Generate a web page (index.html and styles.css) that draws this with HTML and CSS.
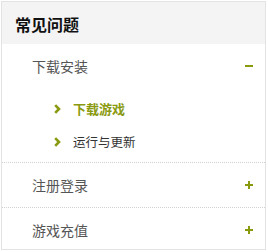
FILE: index.html
```html
<!DOCTYPE html>
<html lang="zh-CN">

<head>
    <meta charset="UTF-8">
    <meta name="viewport" content="width=device-width, initial-scale=1.0">
    <title>常见问题</title>

    <link rel="stylesheet" href="styles.css">
</head>

<body>

    <div class="faq">
        <h2 class="faq--title">常见问题</h2>
        <ul class="faq--list">
            <li class="faq--group opened">
                <a href="javascript:;" class="faq--head">
                    <span>下载安装</span>
                    <i class="faq--toggle"></i>
                </a>
                <ul class="faq--sub">
                    <li>
                        <a href="javascript:;" class="actived">
                            <svg class="arrow" width="7" height="10" viewBox="0 0 7 10"><polyline points="1.2,1.2 5,5 1.2,8.8" fill="none" stroke="#8a9a10" stroke-width="2.6"/></svg>
                            下载游戏
                        </a>
                    </li>
                    <li>
                        <a href="javascript:;">
                            <svg class="arrow" width="7" height="10" viewBox="0 0 7 10"><polyline points="1.2,1.2 5,5 1.2,8.8" fill="none" stroke="#8a9a10" stroke-width="2.6"/></svg>
                            运行与更新
                        </a>
                    </li>
                </ul>
            </li>
            <li class="faq--group">
                <a href="javascript:;" class="faq--head">
                    <span>注册登录</span>
                    <i class="faq--toggle"></i>
                </a>
            </li>
            <li class="faq--group">
                <a href="javascript:;" class="faq--head">
                    <span>游戏充值</span>
                    <i class="faq--toggle"></i>
                </a>
            </li>
        </ul>
    </div>

</body>

</html>
```

FILE: styles.css
```css
/* Variables */
:root {
    --color-green: #8a9a10;
    --color-text: #555555;
    --color-border: #e3e3e3;
}

/* Base */
body {
    margin: 0;
    padding: 1px;
    font-family: "Noto Sans CJK SC", "Microsoft YaHei", sans-serif;
}

a {
    text-decoration: none;
}

ul {
    margin: 0;
    padding: 0;
    list-style: none;
}

/* FAQ */
.faq {
    width: 263px;
    height: 247px;
    border: 1px solid var(--color-border);
    background-color: #ffffff;
}

.faq--title {
    margin: 0;
    height: 42px;
    line-height: 44px;
    padding-left: 13px;
    font-size: 16px;
    font-weight: bold;
    color: #111111;
    background-color: #f4f4f4;
}

.faq--group {
    border-top: 1px dotted #d2d2d2;
}

.faq--group:first-child {
    border-top: 0;
}

.faq--head {
    display: flex;
    align-items: center;
    justify-content: space-between;
    height: 44px;
    padding: 0 12px 0 30px;
    font-size: 14px;
    color: var(--color-text);
}

.faq--toggle {
    position: relative;
    width: 8px;
    height: 8px;
}

.faq--toggle::before,
.faq--toggle::after {
    content: "";
    position: absolute;
    background-color: var(--color-green);
}

.faq--toggle::before {
    left: 0;
    top: 3px;
    width: 8px;
    height: 2px;
}

.faq--toggle::after {
    left: 3px;
    top: 0;
    width: 2px;
    height: 8px;
}

.opened .faq--toggle::after {
    display: none;
}

.faq--sub {
    padding: 4px 0 4px 52px;
}

.faq--sub a {
    display: flex;
    align-items: center;
    gap: 12px;
    height: 33px;
    font-size: 12.5px;
    color: #333333;
}

.faq--sub a.actived {
    font-size: 13px;
    font-weight: bold;
    color: var(--color-green);
}

.arrow {
    flex-shrink: 0;
}
```
